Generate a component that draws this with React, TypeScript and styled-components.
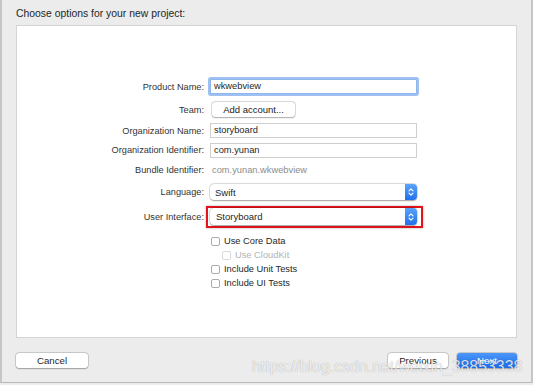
import React from 'react';
import styled, {createGlobalStyle} from 'styled-components';

const GlobalStyle = createGlobalStyle`
    html, body {
        margin: 0;
        padding: 0;
        background: #ececec;
    }
    * {
        box-sizing: border-box;
    }
`;

//Window and panel
const Window = styled.div`
    position: relative;
    width: 533px;
    height: 383px;
    background: #ececec;
    border-left: 2px solid #c6c6c6;
    border-right: 2px solid #c6c6c6;
    border-bottom: 1px solid #b9b9b9;
    font-family: "Liberation Sans", Arial, sans-serif;
    color: #262626;
    display: flex;
    flex-direction: column;
    overflow: hidden;
`;

const Title = styled.div`
    font-size: 10.4px;
    line-height: 12px;
    padding: 8px 0 0 14px;
    height: 25px;
`;

const Panel = styled.div`
    margin: 0 14px;
    height: 313px;
    background: #fff;
    border: 1px solid #d4d4d4;
    padding-top: 50px;
    display: flex;
    flex-direction: column;
`;

//Form rows
const Row = styled.div<{ $h: number }>`
    display: flex;
    align-items: center;
    height: ${p => p.$h}px;
    gap: 6px;
`;

const Label = styled.div`
    width: 187px;
    text-align: right;
    font-size: 9.2px;
    color: #333;
`;

const Field = styled.div<{ $focus?: boolean }>`
    width: 207px;
    height: 15px;
    border: 1px solid #cfcfcf;
    background: #fff;
    font-size: 9.3px;
    line-height: 13px;
    padding-left: 3px;
    color: #1f1f1f;
    ${p => p.$focus && `
        border-color: #8fb5ea;
        box-shadow: 0 0 0 2px #9ec0f2;
        border-radius: 1px;
    `}
`;

const Plain = styled.div`
    font-size: 9.3px;
    color: #8c8c8c;
    padding-left: 2px;
`;

const SmallButton = styled.div`
    width: 83px;
    height: 15px;
    margin-left: 2px;
    background: #fff;
    border-radius: 3px;
    box-shadow: 0 0 0 0.5px rgba(0, 0, 0, 0.22), 0 0.5px 1.5px rgba(0, 0, 0, 0.25);
    font-size: 9.5px;
    line-height: 15px;
    text-align: center;
    color: #222;
`;

const Popup = styled.div<{ $h: number }>`
    width: 207px;
    height: ${p => p.$h}px;
    background: #fff;
    border-radius: 4px;
    box-shadow: 0 0 0 0.5px rgba(0, 0, 0, 0.18), 0 0.5px 1.5px rgba(0, 0, 0, 0.3);
    display: flex;
    align-items: center;
    font-size: 9.5px;
    color: #1f1f1f;
    overflow: hidden;
`;

const PopupText = styled.div<{ $pad: number }>`
    flex: 1;
    padding-left: ${p => p.$pad}px;
`;

const Arrows = styled.div`
    width: 12px;
    height: 100%;
    background: linear-gradient(#5aa4fb, #2170ea);
    display: flex;
    align-items: center;
    justify-content: center;
`;

const Highlight = styled.div`
    margin-left: -4px;
    border: 2px solid #e3151c;
    padding: 0 4px 1px 2px;
    box-shadow: 0 0 2px rgba(0, 0, 0, 0.35);
`;

//Checkboxes
const CheckRow = styled.div<{ $indent?: boolean }>`
    display: flex;
    align-items: center;
    height: 14px;
    gap: 4px;
    padding-left: ${p => (p.$indent ? 205 : 194)}px;
`;

const Box = styled.div<{ $disabled?: boolean }>`
    width: 9px;
    height: 9px;
    border-radius: 2px;
    background: #fff;
    border: 1px solid ${p => (p.$disabled ? '#dadada' : '#acacac')};
`;

const CheckText = styled.div<{ $disabled?: boolean }>`
    font-size: 9.3px;
    color: ${p => (p.$disabled ? '#b3b3b3' : '#262626')};
`;

//Bottom buttons
const Footer = styled.div`
    display: flex;
    align-items: center;
    margin: 15px 14px 0;
    gap: 9px;
`;

const Button = styled.div<{ $w: number; $primary?: boolean }>`
    width: ${p => p.$w}px;
    height: 15px;
    border-radius: 3px;
    font-size: 9.7px;
    line-height: 15px;
    text-align: center;
    color: ${p => (p.$primary ? '#fff' : '#1f1f1f')};
    background: ${p => (p.$primary ? 'linear-gradient(#4c97fa, #1d6ce9)' : '#fff')};
    box-shadow: 0 0 0 0.5px rgba(0, 0, 0, 0.22), 0 0.5px 1.5px rgba(0, 0, 0, 0.25);
`;

const Spacer = styled.div`
    flex: 1;
`;

//Watermark over the footer
const Watermark = styled.div`
    position: absolute;
    left: 250px;
    top: 359px;
    font-size: 15.9px;
    line-height: 16px;
    white-space: nowrap;
    color: rgba(255, 255, 255, 0.82);
    text-shadow: 0 0 1px rgba(0, 0, 0, 0.35);
`;

const Chevrons = () => (
    <svg width="6" height="10" viewBox="0 0 6 10">
        <path d="M1 3.8 L3 1.8 L5 3.8 M1 6.2 L3 8.2 L5 6.2" fill="none" stroke="#fff" strokeWidth="1.1"
              strokeLinecap="round" strokeLinejoin="round"/>
    </svg>
);

export default function App() {
    const checks = [
        {label: 'Use Core Data'},
        {label: 'Use CloudKit', disabled: true},
        {label: 'Include Unit Tests'},
        {label: 'Include UI Tests'},
    ];

    return (
        <>
            <GlobalStyle/>
            <Window>
                <Title>Choose options for your new project:</Title>
                <Panel>
                    <Row $h={21}>
                        <Label>Product Name:</Label>
                        <Field $focus>wkwebview</Field>
                    </Row>
                    <Row $h={25}>
                        <Label>Team:</Label>
                        <SmallButton>Add account...</SmallButton>
                    </Row>
                    <Row $h={17}>
                        <Label>Organization Name:</Label>
                        <Field>storyboard</Field>
                    </Row>
                    <Row $h={22}>
                        <Label>Organization Identifier:</Label>
                        <Field>com.yunan</Field>
                    </Row>
                    <Row $h={18}>
                        <Label>Bundle Identifier:</Label>
                        <Plain>com.yunan.wkwebview</Plain>
                    </Row>
                    <Row $h={26}>
                        <Label>Language:</Label>
                        <Popup $h={16}>
                            <PopupText $pad={5}>Swift</PopupText>
                            <Arrows><Chevrons/></Arrows>
                        </Popup>
                    </Row>
                    <Row $h={24}>
                        <Label>User Interface:</Label>
                        <Highlight>
                            <Popup $h={17}>
                                <PopupText $pad={6}>Storyboard</PopupText>
                                <Arrows><Chevrons/></Arrows>
                            </Popup>
                        </Highlight>
                    </Row>
                    <div style={{height: 5}}/>
                    {checks.map(c => (
                        <CheckRow key={c.label} $indent={c.disabled}>
                            <Box $disabled={c.disabled}/>
                            <CheckText $disabled={c.disabled}>{c.label}</CheckText>
                        </CheckRow>
                    ))}
                </Panel>
                <Footer>
                    <Button $w={72}>Cancel</Button>
                    <Spacer/>
                    <Button $w={60}>Previous</Button>
                    <Button $w={60} $primary>Next</Button>
                </Footer>
                <Watermark>https://blog.csdn.net/weixin_38853338</Watermark>
            </Window>
        </>
    );
}
